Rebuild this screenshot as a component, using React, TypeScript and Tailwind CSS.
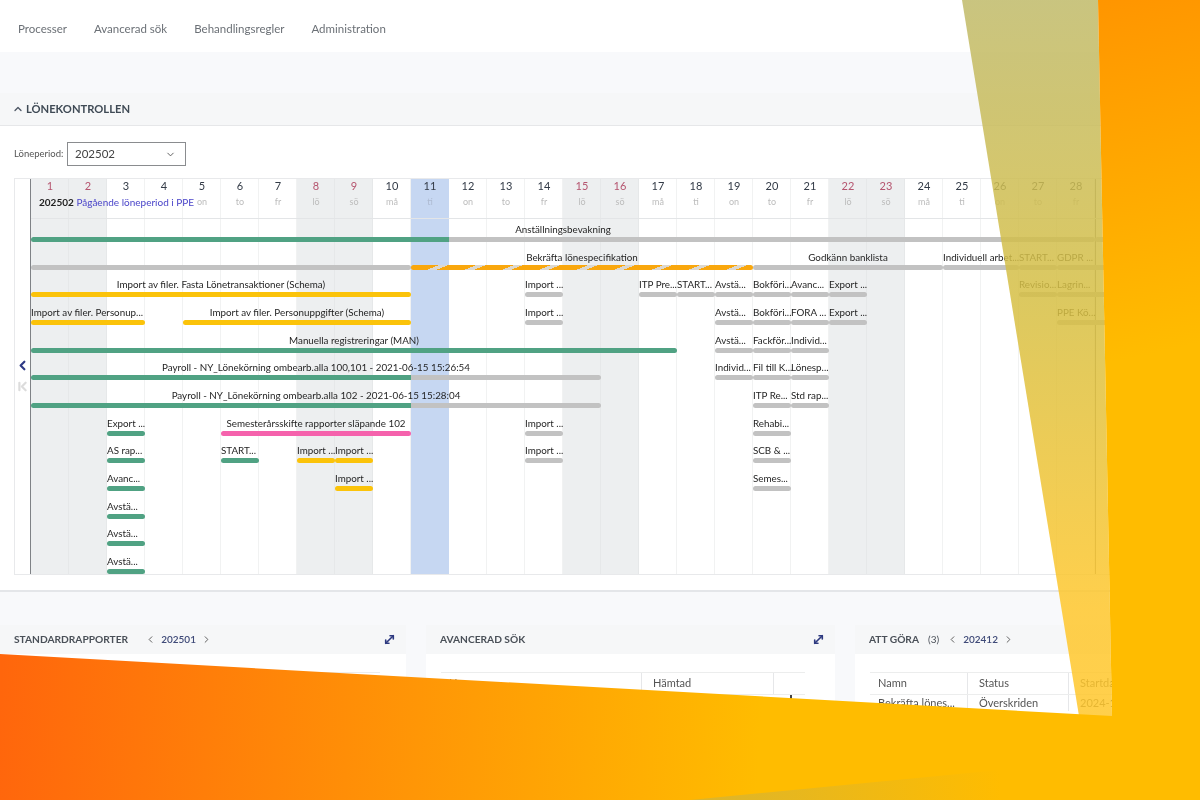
import { ChevronDown, ChevronFirst, ChevronLeft, ChevronRight, ChevronUp, MoveDiagonal } from "lucide-react";

type Seg = [string, number];
type Item = { r: number; from: number; to?: number; text?: string; bar?: string; segs?: Seg[]; center?: boolean };

const GREEN = "bg-[#50a283]";
const GRAY = "bg-[#c2c2c2]";
const YELLOW = "bg-[#fbc30a]";
const PINK = "bg-[#f562ac]";
const HATCH = "bg-[repeating-linear-gradient(158deg,#f9a70d_0_10.5px,#dcd8d0_10.5px_14px)]";

const weekdays = ["lö", "sö", "må", "ti", "on", "to", "fr"];
const days = Array.from({ length: 28 }, (_, i) => i + 1);
const isWeekend = (d: number) => [1, 2, 8, 9, 15, 16, 22, 23].includes(d);

const items: Item[] = [
  { r: 1, from: 1, to: 28, text: "Anställningsbevakning", center: true, segs: [[GREEN, 418], [GRAY, 646]] },
  { r: 1, from: 29, bar: GRAY },
  { r: 2, from: 1, to: 10, bar: GRAY },
  { r: 2, from: 11, to: 19, text: "Bekräfta lönespecifikation", center: true, bar: HATCH },
  { r: 2, from: 20, to: 24, text: "Godkänn banklista", center: true, bar: GRAY },
  { r: 2, from: 25, to: 26, text: "Individuell arbet...", bar: GRAY },
  { r: 2, from: 27, text: "START...", bar: GRAY },
  { r: 2, from: 28, to: 29, text: "GDPR ...", bar: GRAY },
  { r: 3, from: 1, to: 10, text: "Import av filer. Fasta Lönetransaktioner (Schema)", center: true, bar: YELLOW },
  { r: 3, from: 14, text: "Import ...", bar: GRAY },
  { r: 3, from: 17, text: "ITP Pre...", bar: GRAY },
  { r: 3, from: 18, text: "START...", bar: GRAY },
  { r: 3, from: 19, text: "Avstä...", bar: GRAY },
  { r: 3, from: 20, text: "Bokföri...", bar: GRAY },
  { r: 3, from: 21, text: "Avanc...", bar: GRAY },
  { r: 3, from: 22, text: "Export ...", bar: GRAY },
  { r: 3, from: 27, text: "Revisio...", bar: GRAY },
  { r: 3, from: 28, to: 29, text: "Lagrin...", bar: GRAY },
  { r: 4, from: 1, to: 3, text: "Import av filer. Personup...", bar: YELLOW },
  { r: 4, from: 5, to: 10, text: "Import av filer. Personuppgifter (Schema)", center: true, bar: YELLOW },
  { r: 4, from: 14, text: "Import ...", bar: GRAY },
  { r: 4, from: 19, text: "Avstä...", bar: GRAY },
  { r: 4, from: 20, text: "Bokföri...", bar: GRAY },
  { r: 4, from: 21, text: "FORA ...", bar: GRAY },
  { r: 4, from: 22, text: "Export ...", bar: GRAY },
  { r: 4, from: 28, to: 29, text: "PPE Kö...", bar: GRAY },
  { r: 5, from: 1, to: 17, text: "Manuella registreringar (MAN)", center: true, bar: GREEN },
  { r: 5, from: 19, text: "Avstä...", bar: GRAY },
  { r: 5, from: 20, text: "Fackför...", bar: GRAY },
  { r: 5, from: 21, text: "Individ...", bar: GRAY },
  { r: 6, from: 1, to: 15, text: "Payroll - NY_Lönekörning ombearb.alla 100,101 - 2021-06-15 15:26:54", center: true, segs: [[GREEN, 10], [GRAY, 5]] },
  { r: 6, from: 19, text: "Individ...", bar: GRAY },
  { r: 6, from: 20, text: "Fil till K...", bar: GRAY },
  { r: 6, from: 21, text: "Lönesp...", bar: GRAY },
  { r: 7, from: 1, to: 15, text: "Payroll - NY_Lönekörning ombearb.alla 102 - 2021-06-15 15:28:04", center: true, segs: [[GREEN, 10], [GRAY, 5]] },
  { r: 7, from: 20, text: "ITP Re...", bar: GRAY },
  { r: 7, from: 21, text: "Std rap...", bar: GRAY },
  { r: 8, from: 3, text: "Export ...", bar: GREEN },
  { r: 8, from: 6, to: 10, text: "Semesterårsskifte rapporter släpande 102", center: true, bar: PINK },
  { r: 8, from: 14, text: "Import ...", bar: GRAY },
  { r: 8, from: 20, text: "Rehabi...", bar: GRAY },
  { r: 9, from: 3, text: "AS rap...", bar: GREEN },
  { r: 9, from: 6, text: "START...", bar: GREEN },
  { r: 9, from: 8, text: "Import ...", bar: YELLOW },
  { r: 9, from: 9, text: "Import ...", bar: YELLOW },
  { r: 9, from: 14, text: "Import ...", bar: GRAY },
  { r: 9, from: 20, text: "SCB & ...", bar: GRAY },
  { r: 10, from: 3, text: "Avanc...", bar: GREEN },
  { r: 10, from: 9, text: "Import ...", bar: YELLOW },
  { r: 10, from: 20, text: "Semes...", bar: GRAY },
  { r: 11, from: 3, text: "Avstä...", bar: GREEN },
  { r: 12, from: 3, text: "Avstä...", bar: GREEN },
  { r: 13, from: 3, text: "Avstä...", bar: GREEN },
];

function columnClass(d: number) {
  if (d === 11) return "bg-[#c6d7f2]";
  if (isWeekend(d)) return "bg-[#edeff0] border-r border-[#e6e8e9]";
  return "border-r border-[#f1f2f2]";
}

function Gantt() {
  return (
    <div className="grid grid-cols-[repeat(28,38px)_15px] grid-rows-[40px_repeat(13,27.67px)] border-l border-[#7f8286] flex-none">
      {days.map((d) => (
        <div key={`c${d}`} className={columnClass(d)} style={{ gridColumn: d, gridRow: "1 / -1" }} />
      ))}
      <div className="border-l border-[#8f8f8f]" style={{ gridColumn: 29, gridRow: "1 / -1" }} />
      <div className="border-b border-[#e3e5e7]" style={{ gridColumn: "1 / -1", gridRow: 1 }} />
      {days.map((d) => (
        <div key={`h${d}`} className="flex flex-col items-center" style={{ gridColumn: d, gridRow: 1 }}>
          <span className={`text-[11px] leading-[14px] ${isWeekend(d) ? "text-[#b5556f]" : "text-[#333b47]"}`}>{d}</span>
          {d > 4 && (
            <span className={`text-[9px] leading-[12px] mt-[3px] ${d === 11 ? "text-[#aebbd2]" : "text-[#bcbcbc]"}`}>
              {weekdays[(d - 1) % 7]}
            </span>
          )}
        </div>
      ))}
      <div className="pl-[8px] pt-[17px] text-[10px] leading-[12px] whitespace-nowrap" style={{ gridColumn: 1, gridRow: 1 }}>
        <span className="font-bold text-[#222]">202502</span> <span className="text-[#4a45c9]">Pågående löneperiod i PPE</span>
      </div>
      {items.map((it, i) => (
        <div
          key={i}
          className="flex flex-col pt-[3px] min-w-0"
          style={{ gridColumn: `${it.from} / ${(it.to ?? it.from) + 1}`, gridRow: it.r + 1 }}
        >
          <div className={`text-[9.8px] leading-[14px] h-[14px] text-[#1f1f1f] whitespace-nowrap ${it.center ? "text-center" : "text-left"}`}>
            {it.text ?? ""}
          </div>
          <div className="flex h-[5px] mt-[1px] rounded-full overflow-hidden">
            {it.segs ? (
              it.segs.map(([c, n], k) => <div key={k} className={c} style={{ flexGrow: n, flexBasis: 0 }} />)
            ) : (
              <div className={`grow ${it.bar}`} />
            )}
          </div>
        </div>
      ))}
    </div>
  );
}

function Period({ value }: { value: string }) {
  return (
    <div className="flex items-center gap-[5px] text-[#3f4a78]">
      <ChevronLeft size={11} className="text-[#555]" />
      <span className="text-[10px] font-semibold">{value}</span>
      <ChevronRight size={11} className="text-[#555]" />
    </div>
  );
}

function CardHeader({ title, extra, period, expand }: { title: string; extra?: string; period?: string; expand?: boolean }) {
  return (
    <div className="h-[29px] flex items-center bg-[#f6f7f8] pl-[14px] pr-[10px]">
      <span className="text-[10.2px] font-bold text-[#4a5058] whitespace-nowrap">{title}</span>
      {extra && <span className="text-[10px] text-[#4a5058] ml-[9px]">{extra}</span>}
      {period && (
        <div className={extra ? "ml-[8px]" : "ml-[17px]"}>
          <Period value={period} />
        </div>
      )}
      {expand && <MoveDiagonal size={13} strokeWidth={3} className="ml-auto text-[#2e3a80]" />}
    </div>
  );
}

function Cell({ children, w, last, first }: { children?: React.ReactNode; w: string; last?: boolean; first?: boolean }) {
  return (
    <div className={`${w} ${first ? "pl-[8px]" : "pl-[11px]"} flex items-center text-[11px] text-[#555] whitespace-nowrap overflow-hidden ${last ? "" : "border-r border-[#e6e7e9]"}`}>
      {children}
    </div>
  );
}

function Page() {
  return (
    <div className="w-[1200px] h-[800px] bg-[#f8f9fb] font-[Lato,sans-serif] blur-[0.5px]">
      <nav className="h-[52px] bg-white flex items-center gap-[27px] pl-[18px] pt-[6px] text-[11.5px] text-[#6b7076]">
        <span>Processer</span>
        <span>Avancerad sök</span>
        <span>Behandlingsregler</span>
        <span>Administration</span>
      </nav>
      <div className="h-[41px]" />
      <section className="h-[499px] bg-white border-b-2 border-[#e4e6e9]">
        <header className="h-[33px] bg-[#f6f7f8] border-b border-[#e6e7e9] flex items-center pl-[12px] gap-[2px]">
          <ChevronUp size={12} strokeWidth={2.5} className="text-[#4b5563]" />
          <span className="text-[11.2px] font-bold text-[#3f4a55]">LÖNEKONTROLLEN</span>
        </header>
        <div className="flex items-center ml-[14px] mt-[16px] h-[24px]">
          <span className="text-[9.5px] text-[#555] w-[53px]">Löneperiod:</span>
          <div className="w-[119px] h-[24px] border border-[#8a8c8f] flex items-center justify-between pl-[7px] pr-[9px]">
            <span className="text-[11.5px] text-[#444]">202502</span>
            <ChevronDown size={11} className="text-[#555]" />
          </div>
        </div>
        <div className="ml-[14px] mt-[12px] flex h-[397px] overflow-hidden border-y border-[#e8e9eb] bg-white">
          <div className="w-[16px] flex-none border-l border-[#e8e9eb] flex flex-col items-center pt-[179px] gap-[6px]">
            <ChevronLeft size={15} strokeWidth={3.5} className="text-[#2f3a86]" />
            <ChevronFirst size={15} strokeWidth={3.5} className="text-[#dcdcdc]" />
          </div>
          <Gantt />
        </div>
      </section>
      <div className="flex pt-[33px] gap-[20px]">
        <div className="w-[406px] flex-none">
          <CardHeader title="STANDARDRAPPORTER" period="202501" expand />
          <div className="bg-white h-[120px] pt-[18px] pl-[14px] pr-[26px]">
            <div className="h-[22px] border-y border-[#eceded]" />
          </div>
        </div>
        <div className="w-[409px] flex-none">
          <CardHeader title="AVANCERAD SÖK" expand />
          <div className="bg-white h-[120px] pt-[18px] pl-[15px] pr-[30px]">
            <div className="flex h-[23px] border-y border-[#eceded]">
              <Cell w="w-[201px]" first>Namn</Cell>
              <Cell w="w-[132px]">Hämtad</Cell>
              <Cell w="w-[31px]" last />
            </div>
            <div className="flex h-[20px]">
              <div className="w-[349px]" />
              <div className="w-[2px] h-[6px] bg-[#444]" />
            </div>
          </div>
        </div>
        <div className="w-[345px] flex-none">
          <CardHeader title="ATT GÖRA" extra="(3)" period="202412" />
          <div className="bg-white h-[120px] pt-[18px] pl-[15px]">
            <div className="flex h-[23px] border-y border-[#eceded]">
              <Cell w="w-[98px]" first>Namn</Cell>
              <Cell w="w-[101px]">Status</Cell>
              <Cell w="w-[80px]" last>Startdatum</Cell>
            </div>
            <div className="flex h-[16px]">
              <Cell w="w-[98px]" first>Bekräfta lönes...</Cell>
              <Cell w="w-[101px]">Överskriden</Cell>
              <Cell w="w-[80px]" last>2024-12-01</Cell>
            </div>
          </div>
        </div>
      </div>
    </div>
  );
}

export default function App() {
  return (
    <div className="relative w-[1200px] h-[800px] overflow-hidden">
      <Page />
      <svg className="absolute inset-0" width="1200" height="800" viewBox="0 0 1200 800">
        <defs>
          <linearGradient id="bottomGrad" gradientUnits="userSpaceOnUse" x1="0" y1="700" x2="760" y2="740">
            <stop offset="0" stopColor="#ff660c" />
            <stop offset="0.55" stopColor="#ff9606" />
            <stop offset="1" stopColor="#ffbc00" />
          </linearGradient>
          <linearGradient id="rightGrad" gradientUnits="userSpaceOnUse" x1="1090" y1="-10" x2="1170" y2="350">
            <stop offset="0" stopColor="#ff9400" />
            <stop offset="0.5" stopColor="#ffa800" />
            <stop offset="1" stopColor="#ffbc00" />
          </linearGradient>
          <linearGradient id="paneGrad" gradientUnits="userSpaceOnUse" x1="1040" y1="0" x2="1040" y2="716">
            <stop offset="0" stopColor="#c0ba69" />
            <stop offset="0.42" stopColor="#d6bf44" />
            <stop offset="0.85" stopColor="#ffc72c" />
            <stop offset="1" stopColor="#ffc72c" />
          </linearGradient>
          <linearGradient id="wedgeGrad" gradientUnits="userSpaceOnUse" x1="700" y1="800" x2="1000" y2="775">
            <stop offset="0" stopColor="#dcb52c" />
            <stop offset="1" stopColor="#ffbc00" />
          </linearGradient>
        </defs>
        <polygon points="962,0 1098,0 1112,716 1079,716" fill="url(#paneGrad)" fillOpacity="0.85" />
        <polygon points="0,654 1112,716 1112,800 0,800" fill="url(#bottomGrad)" />
        <polygon points="1098,0 1200,0 1200,800 1112,800 1112,716" fill="url(#rightGrad)" />
        <polygon points="690,800 1000,770 1000,800" fill="url(#wedgeGrad)" />
      </svg>
    </div>
  );
}
